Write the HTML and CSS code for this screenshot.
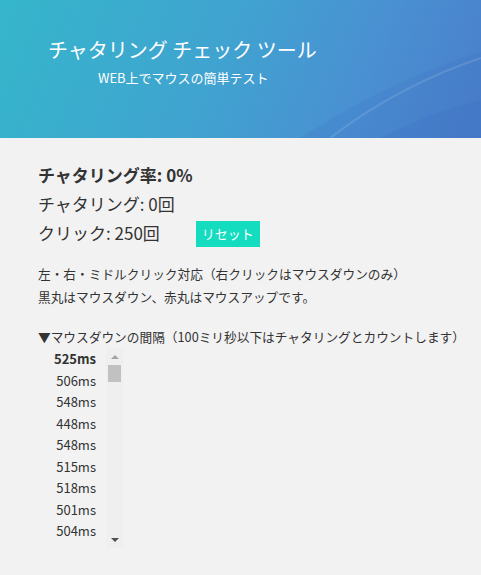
FILE: index.html
```html
<!DOCTYPE html>
<html lang="ja">
<head>
<meta charset="utf-8">
<title>チャタリング チェック ツール</title>
<link rel="stylesheet" href="styles.css">
</head>
<body>
<header class="hero">
  <svg class="hero-curves" viewBox="0 0 481 138" preserveAspectRatio="none" aria-hidden="true">
    <path d="M300 138 C 360 100, 420 70, 481 52 L 481 138 Z" fill="#3f6fc0" opacity="0.18"/>
    <path d="M330 138 C 380 100, 430 75, 481 58" stroke="#ffffff" stroke-width="2" fill="none" opacity="0.12"/>
    <path d="M380 138 C 420 118, 450 108, 481 100 L 481 138 Z" fill="#3d6fc2" opacity="0.25"/>
  </svg>
  <h1 class="title">チャタリング チェック ツール</h1>
  <p class="subtitle">WEB上でマウスの簡単テスト</p>
</header>
<main class="content">
  <div class="stats">
    <div class="rate">チャタリング率: 0%</div>
    <div class="stat">チャタリング: 0回</div>
    <div class="stat click-row"><span>クリック: 250回</span><button class="reset">リセット</button></div>
  </div>
  <p class="note">左・右・ミドルクリック対応（右クリックはマウスダウンのみ）<br>黒丸はマウスダウン、赤丸はマウスアップです。</p>
  <p class="interval-title">▼マウスダウンの間隔（100ミリ秒以下はチャタリングとカウントします）</p>
  <div class="interval-box">
    <div class="intervals">
      <div class="ms latest">525ms</div>
      <div class="ms">506ms</div>
      <div class="ms">548ms</div>
      <div class="ms">448ms</div>
      <div class="ms">548ms</div>
      <div class="ms">515ms</div>
      <div class="ms">518ms</div>
      <div class="ms">501ms</div>
      <div class="ms">504ms</div>
    </div>
    <div class="scrollbar" aria-hidden="true">
      <div class="sb-btn"><span class="arrow-up"></span></div>
      <div class="sb-track"><div class="sb-thumb"></div></div>
      <div class="sb-btn"><span class="arrow-down"></span></div>
    </div>
  </div>
</main>
</body>
</html>
```
FILE: styles.css
```css
html, body {
  margin: 0;
  padding: 0;
}
body {
  background: #f2f2f2;
  color: #333333;
  font-family: "Noto Sans CJK JP", "Noto Sans", sans-serif;
  width: 481px;
  height: 575px;
  overflow: hidden;
}
.hero {
  position: relative;
  height: 138px;
  box-sizing: border-box;
  padding: 37px 0 0 48px;
  background: linear-gradient(112deg, #35b6cb 0%, #40a3d0 45%, #4a8fd2 75%, #4a7ec9 100%);
  overflow: hidden;
}
.hero-curves {
  position: absolute;
  left: 0;
  top: 0;
  width: 100%;
  height: 100%;
}
.title {
  position: relative;
  margin: 0;
  font-weight: normal;
  font-size: 20px;
  line-height: 26px;
  color: #ffffff;
}
.subtitle {
  position: relative;
  margin: 6px 0 0 50px;
  font-size: 13px;
  line-height: 18px;
  color: #ffffff;
}
.content {
  padding: 22px 0 0 38px;
}
.stats {
  font-size: 17px;
  line-height: 29px;
  color: #333333;
}
.rate {
  font-weight: bold;
}
.click-row {
  display: flex;
  align-items: flex-start;
}
.reset {
  margin: 3px 0 0 36px;
  width: 64px;
  height: 26px;
  border: none;
  padding: 0;
  background: #14dcbf;
  color: #ffffff;
  font-family: "Noto Sans CJK JP", "Noto Sans", sans-serif;
  font-size: 13px;
  line-height: 26px;
}
.note {
  margin: 15px 0 0 0;
  font-size: 12.7px;
  line-height: 23px;
  color: #333333;
}
.interval-title {
  margin: 17px 0 0 0;
  font-size: 12.7px;
  line-height: 23px;
  color: #333333;
}
.interval-box {
  display: flex;
  height: 200px;
}
.intervals {
  width: 68px;
  box-sizing: border-box;
  padding-right: 10px;
  text-align: right;
  overflow: hidden;
}
.ms {
  font-size: 13px;
  line-height: 21.5px;
  color: #333333;
}
.ms.latest {
  font-weight: bold;
}
.scrollbar {
  width: 17px;
  display: flex;
  flex-direction: column;
  background: #efefef;
}
.sb-btn {
  height: 17px;
  display: flex;
  align-items: center;
  justify-content: center;
}
.sb-track {
  flex: 1;
}
.sb-thumb {
  margin: 0 2px;
  height: 17px;
  background: #c1c1c1;
}
.arrow-up {
  width: 0;
  height: 0;
  border-left: 4px solid transparent;
  border-right: 4px solid transparent;
  border-bottom: 4px solid #a3a3a3;
}
.arrow-down {
  width: 0;
  height: 0;
  border-left: 4px solid transparent;
  border-right: 4px solid transparent;
  border-top: 4px solid #505050;
}
```
